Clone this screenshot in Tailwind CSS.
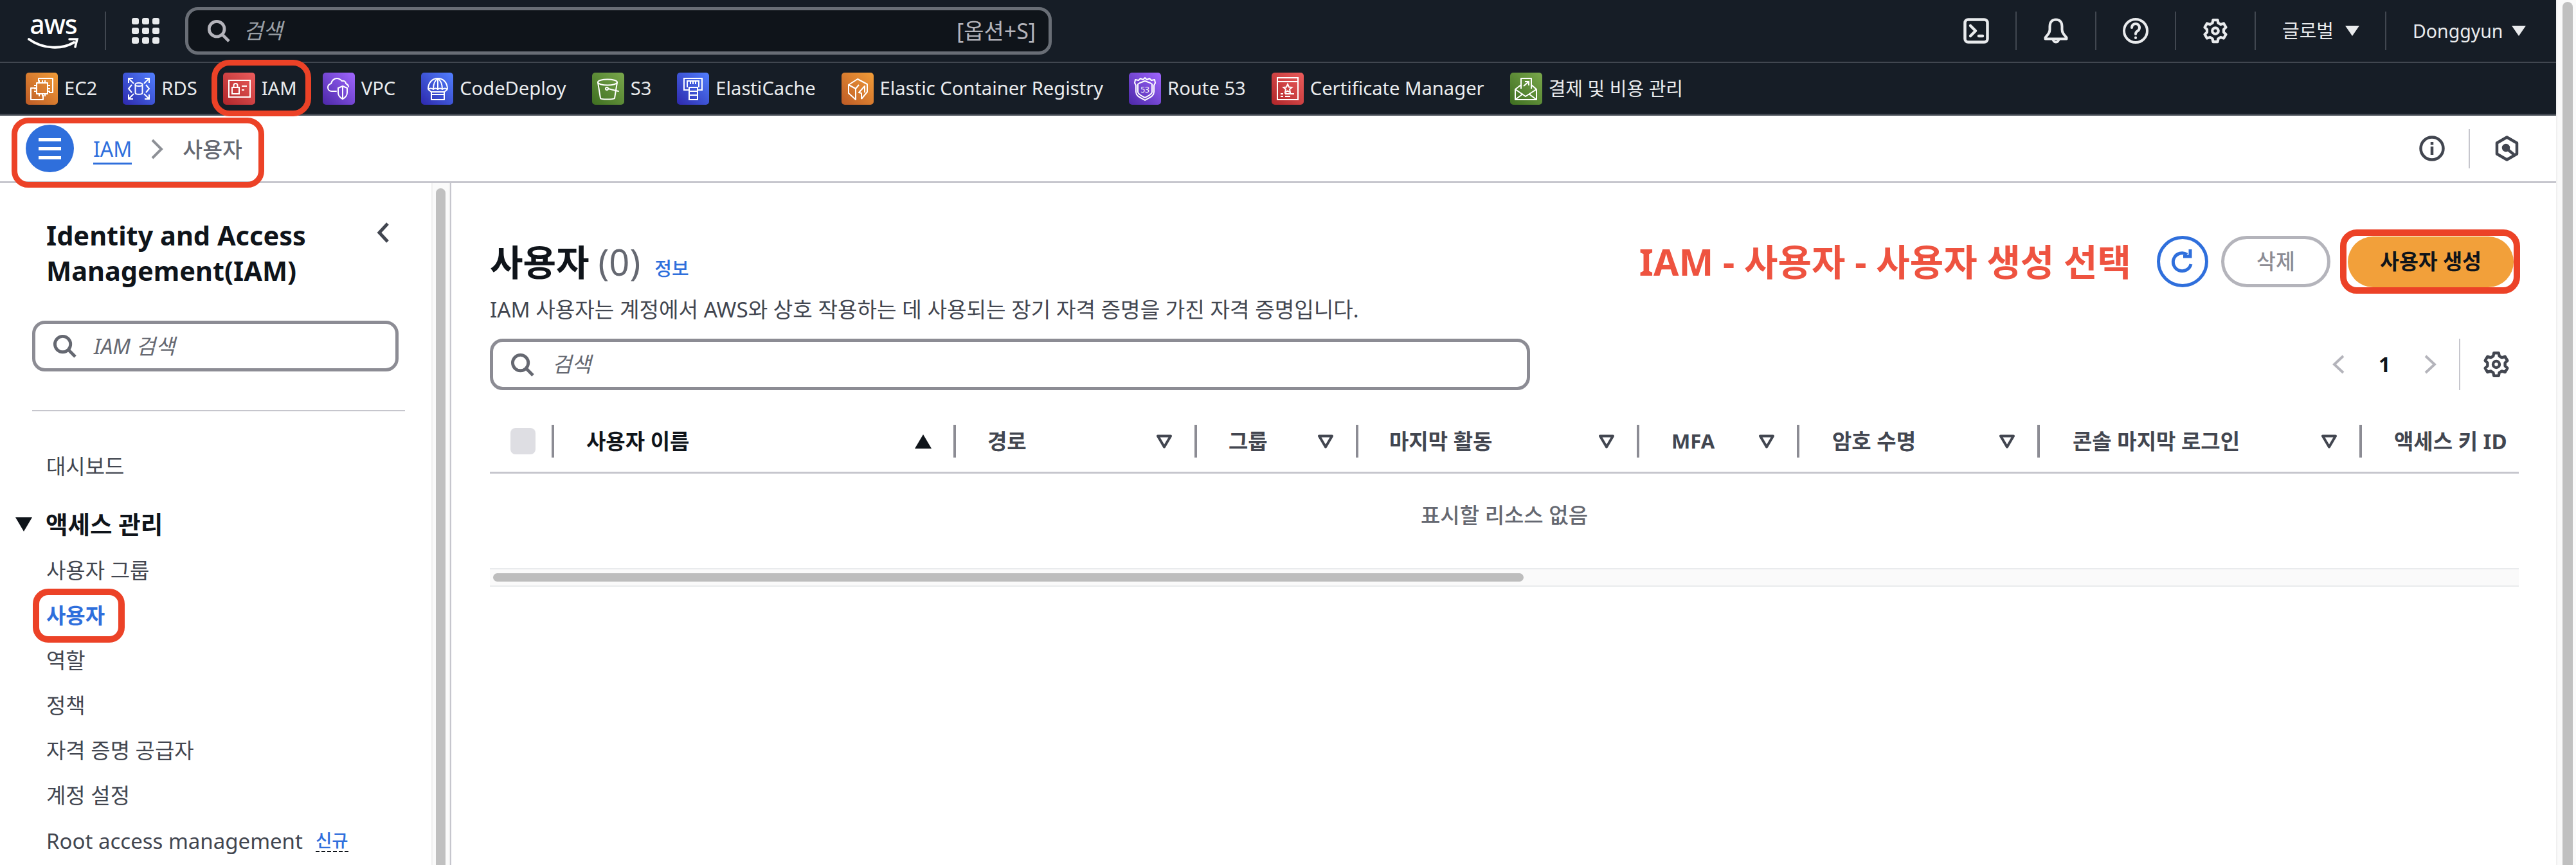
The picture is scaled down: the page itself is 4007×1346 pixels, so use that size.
<!DOCTYPE html>
<html lang="ko">
<head>
    <meta charset="UTF-8">
    <title>IAM 사용자</title>
    <script src="https://cdn.jsdelivr.net/npm/@tailwindcss/browser@4"></script>
</head>
<body class="bg-white text-[#0f141a] font-['Noto_Sans','Noto_Sans_CJK_KR',sans-serif]">

<svg class="hidden">
    <symbol id="gear" viewBox="0 0 16 16"><path fill="none" stroke="currentColor" stroke-width="1.7" stroke-linejoin="round" d="M6.6 1.2h2.8l.4 1.9 1.5.9 1.9-.6 1.4 2.4-1.4 1.3v1.8l1.4 1.3-1.4 2.4-1.9-.6-1.5.9-.4 1.9H6.6l-.4-1.9-1.5-.9-1.9.6-1.4-2.4 1.4-1.3V7.1L1.4 5.8l1.4-2.4 1.9.6 1.5-.9z"/><circle cx="8" cy="8" r="1.9" fill="none" stroke="currentColor" stroke-width="1.7"/></symbol>
    <symbol id="search" viewBox="0 0 38 38"><circle cx="16" cy="16" r="12.5" fill="none" stroke="currentColor" stroke-width="5"/><path d="M25 25l11 11" stroke="currentColor" stroke-width="5" fill="none"/></symbol>
    <symbol id="sortdown" viewBox="0 0 26 22"><path d="M3 2.5h20L13 19.5z" fill="none" stroke="currentColor" stroke-width="4" stroke-linejoin="round"/></symbol>
</svg>

<div class="relative flex h-[1346px] w-[4007px] overflow-hidden">
    <div class="flex w-[3976px] flex-col">

        <!-- Top nav -->
        <header class="flex h-[98px] items-center border-b-2 border-[#414750] bg-[#161d26] pl-[43px] text-[#e9ebed]">
            <div class="flex h-[60px] w-[80px] flex-col items-center">
                <span class="h-[38px] text-[41px] leading-[38px] font-medium tracking-[-1px] text-white">aws</span>
                <svg class="mt-[2px] h-[20px] w-[80px]" viewBox="0 0 80 20"><path d="M2 3c22 16 52 16 70 5" fill="none" stroke="white" stroke-width="4" stroke-linecap="round"/><path d="M65 3h12l-3 12" fill="none" stroke="white" stroke-width="3.5" stroke-linecap="round"/></svg>
            </div>
            <div class="ml-[40px] h-[60px] w-[2px] bg-[#414750]"></div>
            <div class="ml-[40px] grid w-[43px] grid-cols-3 gap-[5px]">
                <i class="h-[10px] rounded-[3px] bg-[#e9ebed]"></i><i class="h-[10px] rounded-[3px] bg-[#e9ebed]"></i><i class="h-[10px] rounded-[3px] bg-[#e9ebed]"></i>
                <i class="h-[10px] rounded-[3px] bg-[#e9ebed]"></i><i class="h-[10px] rounded-[3px] bg-[#e9ebed]"></i><i class="h-[10px] rounded-[3px] bg-[#e9ebed]"></i>
                <i class="h-[10px] rounded-[3px] bg-[#e9ebed]"></i><i class="h-[10px] rounded-[3px] bg-[#e9ebed]"></i><i class="h-[10px] rounded-[3px] bg-[#e9ebed]"></i>
            </div>
            <div class="ml-[40px] flex h-[74px] w-[1348px] items-center rounded-[20px] border-[5px] border-[#696e76] bg-[#0f141a] pr-[20px] pl-[28px] text-[#b4b4bb]">
                <svg class="h-[36px] w-[38px]"><use href="#search"/></svg>
                <span class="ml-[20px] text-[33px] italic text-[#9ba0a6]">검색</span>
                <span class="ml-auto text-[34px]">[옵션+S]</span>
            </div>
            <div class="ml-auto flex h-[60px] items-center text-[#e9ebed]">
                <div class="px-[41px]">
                    <svg class="h-[40px] w-[40px]" viewBox="0 0 40 40" fill="none" stroke="currentColor" stroke-width="4.5" stroke-linecap="round" stroke-linejoin="round"><rect x="2.5" y="2.5" width="35" height="35" rx="5"/><path d="M11 12l8 8-8 8"/><path d="M24 28h6"/></svg>
                </div>
                <div class="flex h-full items-center border-l-2 border-[#414750] px-[41px]">
                    <svg class="h-[40px] w-[40px]" viewBox="0 0 40 40" fill="none" stroke="currentColor" stroke-width="4" stroke-linecap="round" stroke-linejoin="round"><path d="M20 2.5c-6.500 0-9.500 4.500-9.500 10.500v5c0 5-3 8-7 12.500v2h33v-2c-4-4.500-7-7.500-7-12.500v-5c0-6-3-10.500-9.500-10.500z"/><path d="M15.500 33a4.500 4.500 0 0 0 9 0"/></svg>
                </div>
                <div class="flex h-full items-center border-l-2 border-[#414750] px-[41px]">
                    <svg class="h-[40px] w-[40px]" viewBox="0 0 40 40" fill="none" stroke="currentColor" stroke-width="4" stroke-linecap="round"><circle cx="20" cy="20" r="18"/><path d="M14 15a6 6 0 1 1 9 5.200c-2 1.200-3 2.300-3 4.800"/><path d="M20 30.500v.5"/></svg>
                </div>
                <div class="flex h-full items-center border-l-2 border-[#414750] px-[41px]">
                    <svg class="h-[40px] w-[40px]"><use href="#gear"/></svg>
                </div>
                <div class="flex h-full w-[203px] items-center border-l-2 border-[#414750] pl-[41px] text-[29px]">
                    글로벌
                    <svg class="ml-[18px] h-[16px] w-[22px]" viewBox="0 0 22 16"><path d="M0 0h22L11 16z" fill="currentColor"/></svg>
                </div>
                <div class="flex h-full w-[266px] items-center border-l-2 border-[#414750] pl-[41px] text-[28.5px]">
                    Donggyun
                    <svg class="ml-[14px] h-[16px] w-[22px]" viewBox="0 0 22 16"><path d="M0 0h22L11 16z" fill="currentColor"/></svg>
                </div>
            </div>
        </header>

        <!-- Favorites bar -->
        <nav class="flex h-[82px] items-center gap-[40px] border-b-[3px] border-[#414750] bg-[#161d26] pl-[40px] text-[29.15px] text-[#e9ebed]">
            <div class="flex items-center gap-[10px]">
                <svg class="h-[50px] w-[50px] rounded-[5px] bg-linear-to-tr from-[#bd5b26] to-[#f29d38]" viewBox="0 0 50 50" fill="none" stroke="white" stroke-width="2" stroke-linejoin="round"><path d="M20 14V9h22v22h-6"/><path d="M16 24H8v18h19v-7"/><rect x="17" y="16" width="17" height="17"/><path d="M21 12v4M26 12v4M30 12v4M21 33v4M26 33v4M30 33v4M13 20h4M13 25h4M13 29h4M34 20h4M34 25h4M34 29h4"/></svg>
                EC2
            </div>
            <div class="flex items-center gap-[10px]">
                <svg class="h-[50px] w-[50px] rounded-[5px] bg-linear-to-tr from-[#2e27ad] to-[#527fff]" viewBox="0 0 50 50" fill="none" stroke="white" stroke-width="2"><path d="M9 9l8 8M9 16V9h7M41 9l-8 8M41 16V9h-7M9 41l8-8M9 34v7h7M41 41l-8-8M41 34v7h-7"/><ellipse cx="25" cy="18.500" rx="5.500" ry="2.500"/><path d="M19.500 18.500v13c0 3 11 3 11 0v-13"/><path d="M14 19l-5 6 5 6M36 19l5 6-5 6"/></svg>
                RDS
            </div>
            <div class="flex items-center gap-[10px]">
                <svg class="h-[50px] w-[50px] rounded-[5px] bg-linear-to-tr from-[#b0252a] to-[#ec5c5c]" viewBox="0 0 50 50" fill="none" stroke="white" stroke-width="2"><rect x="9" y="12" width="33" height="26"/><rect x="14" y="23" width="11" height="10"/><path d="M16.500 23v-3a3 3 0 0 1 6 0v3M29 21h8M29 27h4"/></svg>
                IAM
            </div>
            <div class="flex items-center gap-[10px]">
                <svg class="h-[50px] w-[50px] rounded-[5px] bg-linear-to-tr from-[#4d27a8] to-[#a166ff]" viewBox="0 0 50 50" fill="none" stroke="white" stroke-width="2" stroke-linecap="round" stroke-linejoin="round"><path d="M21 29h-7c-4 0-6-3-6-6 0-3 2-5 5-6 1-5 5-8 9-8 4 0 6 2 8 4 3-1 6 1 6 4 2 1 4 2 4 5"/><path d="M31 21l7 3v7c0 5-3 8-7 10-4-2-7-5-7-10v-7z"/><path d="M31 21v20"/></svg>
                VPC
            </div>
            <div class="flex items-center gap-[10px]">
                <svg class="h-[50px] w-[50px] rounded-[5px] bg-linear-to-tr from-[#2e27ad] to-[#527fff]" viewBox="0 0 50 50" fill="none" stroke="white" stroke-width="2" stroke-linejoin="round"><path d="M11 26C11 16 17 9 26 9s15 7 15 17"/><path d="M26 9v18M26 9c-6 4-7 11-7 17M26 9c6 4 7 11 7 17"/><path d="M11 26q4-3 8 0q3.500-3 7 0q3.500-3 7 0q4-3 8 0"/><path d="M11 26l6 5M41 26l-6 5"/><rect x="16" y="30" width="20" height="12"/><path d="M16 34h20"/></svg>
                CodeDeploy
            </div>
            <div class="flex items-center gap-[10px]">
                <svg class="h-[50px] w-[50px] rounded-[5px] bg-linear-to-tr from-[#3f6f21] to-[#7aa84c]" viewBox="0 0 50 50" fill="none" stroke="white" stroke-width="2" stroke-linecap="round"><ellipse cx="24" cy="15" rx="15" ry="4.500"/><path d="M9 15l4 25c1 2 20 2 22 0l4-25"/><circle cx="23" cy="25" r="2"/><path d="M25 25l16 4"/></svg>
                S3
            </div>
            <div class="flex items-center gap-[10px]">
                <svg class="h-[50px] w-[50px] rounded-[5px] bg-linear-to-tr from-[#2e27ad] to-[#527fff]" viewBox="0 0 50 50" fill="none" stroke="white" stroke-width="2"><path d="M19 27h-8V9h28v18h-8"/><path d="M16 23V13h18v10"/><path d="M21 13v5M25 13v5M29 13v5"/><rect x="19" y="23" width="13" height="19"/><path d="M19 29h13M19 35h13"/></svg>
                ElastiCache
            </div>
            <div class="flex items-center gap-[10px]">
                <svg class="h-[50px] w-[50px] rounded-[5px] bg-linear-to-tr from-[#bd5b26] to-[#f29d38]" viewBox="0 0 50 50" fill="none" stroke="white" stroke-width="2" stroke-linejoin="round"><path d="M11 19l14-9 15 8v12l-9 11"/><path d="M11 19v13l11 10V25z"/><path d="M22 25l5-6"/><path d="M31 41v-9l-4-1 9-10v10"/></svg>
                Elastic Container Registry
            </div>
            <div class="flex items-center gap-[10px]">
                <svg class="h-[50px] w-[50px] rounded-[5px] bg-linear-to-tr from-[#4d27a8] to-[#a166ff]" viewBox="0 0 50 50" fill="none" stroke="white" stroke-width="2" stroke-linejoin="round"><path d="M25 8l3 3 4-2 3 3 5-1 1 5-2 4v10c0 7-8 9-14 13-6-4-14-6-14-13V20l-2-4 1-5 5 1 3-3 4 2z"/><path d="M25 13l8 3 3 2v12c0 4-6 6-11 9-5-3-11-5-11-9V18l3-2z"/><text x="25" y="31" font-size="12" fill="white" stroke="none" text-anchor="middle">53</text></svg>
                Route 53
            </div>
            <div class="flex items-center gap-[10px]">
                <svg class="h-[50px] w-[50px] rounded-[5px] bg-linear-to-tr from-[#b0252a] to-[#ec5c5c]" viewBox="0 0 50 50" fill="none" stroke="white" stroke-width="2"><path d="M9 8h32v34H9z"/><path d="M9 14h32"/><path d="M25 18l2 4.500 4.500.5-3.500 3 1 5-4-2.500-4 2.500 1-5-3.500-3 4.500-.5z"/><path d="M14 33h4M21 33h14M14 37h4M21 37h8"/></svg>
                Certificate Manager
            </div>
            <div class="flex items-center gap-[10px]">
                <svg class="h-[50px] w-[50px] rounded-[5px] bg-linear-to-tr from-[#3f6f21] to-[#7aa84c]" viewBox="0 0 50 50" fill="none" stroke="white" stroke-width="2" stroke-linejoin="round"><path d="M17 25V9h16v16"/><path d="M21 21l8-7M23 14h6v6"/><path d="M17 19l-9 7v16h33V26l-8-7"/><path d="M8 26l16 11 17-11M8 42l12-9M41 42l-12-9"/></svg>
                <span class="text-[29px]">결제 및 비용 관리</span>
            </div>
        </nav>

        <!-- Breadcrumb bar -->
        <div class="flex h-[105px] items-center border-b-[3px] border-[#c6c6cd] pl-[40px]">
            <div class="flex h-[74px] w-[75px] flex-col items-center justify-center gap-[9px] rounded-full bg-[#2f6fdc]">
                <i class="h-[5px] w-[35px] bg-white"></i><i class="h-[5px] w-[35px] bg-white"></i><i class="h-[5px] w-[35px] bg-white"></i>
            </div>
            <span class="mt-[4px] ml-[30px] border-b-[3px] border-[#2f6fdc] text-[32px] leading-[42px] text-[#2f6fdc]">IAM</span>
            <svg class="mt-[2px] ml-[30px] h-[32px] w-[19px]" viewBox="0 0 19 32"><path d="M2 2l14 14-14 14" fill="none" stroke="#8d9096" stroke-width="4"/></svg>
            <span class="mt-[2px] ml-[30px] text-[33.500px] font-medium text-[#656871]">사용자</span>
            <div class="ml-auto flex h-[61px] items-center pr-[58px] text-[#424650]">
                <svg class="h-[40px] w-[40px]" viewBox="0 0 40 40" fill="none" stroke="currentColor" stroke-width="4.500"><circle cx="20" cy="20" r="17.500"/><path d="M20 17v13M20 10v4.500"/></svg>
                <div class="ml-[37px] h-full w-[2px] bg-[#c6c6cd]"></div>
                <svg class="ml-[39px] h-[40px] w-[37px]" viewBox="0 0 37 40" fill="none" stroke="currentColor" stroke-width="4.500" stroke-linejoin="round"><path d="M18.500 2.500l15.500 9v17l-15.500 9-15.500-9v-17z"/><circle cx="17" cy="19" r="4" fill="currentColor"/><path d="M18 20l12 10"/></svg>
            </div>
        </div>

        <div class="flex min-h-0 flex-1">
            <!-- Sidebar -->
            <aside class="flex w-[702px] border-r-2 border-[#c6c6cd]">
                <div class="w-[671px] pt-[54px] pl-[24px]">
                    <div class="flex items-start pl-[48px]">
                        <h2 class="w-[514px] text-[41.500px] leading-[55px] font-bold">Identity and Access Management(IAM)</h2>
                        <svg class="mt-[6px] h-[34px] w-[20px]" viewBox="0 0 20 34"><path d="M17 3L4 17l13 14" fill="none" stroke="#424650" stroke-width="5"/></svg>
                    </div>
                    <div class="mt-[50px] ml-[26px] flex h-[79px] w-[570px] items-center rounded-[20px] border-[5px] border-[#8c8c94] pl-[27px] text-[#656871]">
                        <svg class="h-[37px] w-[37px]"><use href="#search"/></svg>
                        <span class="ml-[27px] text-[33px] italic">IAM 검색</span>
                    </div>
                    <div class="mt-[60px] ml-[26px] h-[2px] w-[580px] bg-[#c6c6cd]"></div>
                    <ul class="mt-[51px] text-[33px] text-[#424650]">
                        <li class="flex h-[70px] items-center pl-[48px]">대시보드</li>
                        <li class="mt-[20px] flex h-[70px] items-center gap-[21px] text-[37.500px] font-bold text-[#0f141a]">
                            <svg class="h-[22px] w-[26px]" viewBox="0 0 26 22"><path d="M0 0h26L13 22z" fill="#0f141a"/></svg>
                            액세스 관리
                        </li>
                        <li class="mt-[2px] flex h-[70px] items-center pl-[48px]">사용자 그룹</li>
                        <li class="flex h-[70px] items-center pl-[48px] font-bold text-[#2f6fdc]">사용자</li>
                        <li class="flex h-[70px] items-center pl-[48px]">역할</li>
                        <li class="flex h-[70px] items-center pl-[48px]">정책</li>
                        <li class="flex h-[70px] items-center pl-[48px]">자격 증명 공급자</li>
                        <li class="flex h-[70px] items-center pl-[48px]">계정 설정</li>
                        <li class="flex h-[72px] items-center pl-[48px]">
                            Root access management
                            <span class="ml-[20px] border-b-2 border-dashed border-[#0f141a] text-[27.500px] leading-[32px] font-medium text-[#2f6fdc]">신규</span>
                        </li>
                    </ul>
                </div>
                <div class="w-[29px] border-x-2 border-[#f0f0f0] bg-[#fafafa] px-[5px] pt-[8px]">
                    <div class="h-full rounded-t-[8px] bg-[#c0c0c0]"></div>
                </div>
            </aside>

            <!-- Main -->
            <main class="w-[3274px] pt-[82px] pr-[58px] pl-[60px]">
                <div class="flex h-[80px] items-center">
                    <h1 class="flex items-baseline text-[56px] font-bold">
                        사용자
                        <span class="ml-[14px] font-normal text-[#656871]">(0)</span>
                        <span class="ml-[22px] text-[29px] font-medium text-[#2f6fdc]">정보</span>
                    </h1>
                    <span class="ml-auto text-[57px] leading-none font-bold text-[#ee5340]">IAM - 사용자 - 사용자 생성 선택</span>
                    <div class="ml-[40px] flex h-[80px] w-[80px] items-center justify-center rounded-full border-[5px] border-[#2f6fdc]">
                        <svg class="h-[44px] w-[44px]" viewBox="0 0 44 44" fill="none" stroke="#2f6fdc" stroke-width="5"><path d="M35 26a14 14 0 1 1-6-15"/><path d="M34 3v11H23"/></svg>
                    </div>
                    <div class="ml-[20px] flex h-[80px] w-[170px] items-center justify-center rounded-full border-[5px] border-[#b4b4bb] text-[32.500px] font-medium text-[#8c8c94]">삭제</div>
                    <div class="mr-[8px] ml-[27px] flex h-[79px] w-[258px] items-center justify-center rounded-full bg-[#f2a03a] text-[32.500px] font-bold">사용자 생성</div>
                </div>
                <p class="mt-[15px] text-[33.200px] leading-[40px] text-[#424650]">IAM 사용자는 계정에서 AWS와 상호 작용하는 데 사용되는 장기 자격 증명을 가진 자격 증명입니다.</p>
                <div class="mt-[25px] flex items-center">
                    <div class="flex h-[80px] w-[1618px] items-center rounded-[20px] border-[5px] border-[#8c8c94] pl-[27px] text-[#656871]">
                        <svg class="h-[37px] w-[37px]"><use href="#search"/></svg>
                        <span class="ml-[28px] text-[33px] italic">검색</span>
                    </div>
                    <div class="ml-auto flex h-[80px] items-center">
                        <svg class="h-[32px] w-[23px]" viewBox="0 0 23 32"><path d="M19 3L5 16l14 13" fill="none" stroke="#b4b4bb" stroke-width="4"/></svg>
                        <span class="mx-[51px] w-[18px] text-center text-[32px] font-bold">1</span>
                        <svg class="h-[32px] w-[23px]" viewBox="0 0 23 32"><path d="M4 3l14 13L4 29" fill="none" stroke="#b4b4bb" stroke-width="4"/></svg>
                        <div class="mr-[35px] ml-[33px] h-full w-[2px] bg-[#c6c6cd]"></div>
                        <svg class="mr-[14px] h-[42px] w-[42px] text-[#424650]"><use href="#gear"/></svg>
                    </div>
                </div>

                <!-- Table -->
                <div class="mt-[54px] flex h-[76px] overflow-hidden border-b-[3px] border-[#c6c6cd] pb-[22px] text-[33px] font-bold text-[#424650]">
                    <div class="flex w-[96px] shrink-0 items-center pl-[32px]"><span class="h-[41px] w-[39px] rounded-[8px] bg-[#dedee3]"></span></div>
                    <div class="flex w-[625px] shrink-0 items-center border-l-4 border-[#8c8c94] pr-[34px] pl-[50px] text-[#0f141a]">사용자 이름<svg class="ml-auto h-[22px] w-[26px]" viewBox="0 0 26 22"><path d="M13 0l13 22H0z" fill="#0f141a"/></svg></div>
                    <div class="flex w-[375px] shrink-0 items-center border-l-4 border-[#8c8c94] pr-[34px] pl-[49px]">경로<svg class="ml-auto h-[22px] w-[26px]"><use href="#sortdown"/></svg></div>
                    <div class="flex w-[251px] shrink-0 items-center border-l-4 border-[#8c8c94] pr-[34px] pl-[49px]">그룹<svg class="ml-auto h-[22px] w-[26px]"><use href="#sortdown"/></svg></div>
                    <div class="flex w-[437px] shrink-0 items-center border-l-4 border-[#8c8c94] pr-[34px] pl-[48px]">마지막 활동<svg class="ml-auto h-[22px] w-[26px]"><use href="#sortdown"/></svg></div>
                    <div class="flex w-[249px] shrink-0 items-center border-l-4 border-[#8c8c94] pr-[34px] pl-[50px] text-[31px]">MFA<svg class="ml-auto h-[22px] w-[26px]"><use href="#sortdown"/></svg></div>
                    <div class="flex w-[374px] shrink-0 items-center border-l-4 border-[#8c8c94] pr-[34px] pl-[51px]">암호 수명<svg class="ml-auto h-[22px] w-[26px]"><use href="#sortdown"/></svg></div>
                    <div class="flex w-[501px] shrink-0 items-center border-l-4 border-[#8c8c94] pr-[34px] pl-[51px]">콘솔 마지막 로그인<svg class="ml-auto h-[22px] w-[26px]"><use href="#sortdown"/></svg></div>
                    <div class="flex w-[247px] shrink-0 items-center border-l-4 border-[#8c8c94] pl-[50px] whitespace-nowrap">액세스 키 ID</div>
                </div>
                <div class="flex h-[147px] items-center justify-center pb-[18px] text-[33px] font-medium text-[#656871]">표시할 리소스 없음</div>
                <div class="h-[29px] border-y-2 border-[#e9ebed] bg-[#fafafa] py-[6px] pl-[5px]">
                    <div class="h-full w-[1603px] rounded-full bg-[#bdbdbd]"></div>
                </div>
            </main>
        </div>
    </div>

    <!-- Page scrollbar -->
    <div class="w-[31px] border-l-2 border-[#f0f0f0] bg-[#fafafa] pt-[3px] pl-[8px]">
        <div class="h-full w-[16px] rounded-t-[8px] bg-[#c0c0c0]"></div>
    </div>

    <!-- Red annotation outlines -->
    <div class="absolute top-[93px] left-[329px] h-[88px] w-[155px] rounded-[28px] border-[9px] border-[#ec4227]"></div>
    <div class="absolute top-[183px] left-[18px] h-[109px] w-[393px] rounded-[26px] border-[9px] border-[#ec4227]"></div>
    <div class="absolute top-[916px] left-[51px] h-[84px] w-[143px] rounded-[24px] border-[10px] border-[#ec4227]"></div>
    <div class="absolute top-[357px] left-[3640px] h-[100px] w-[280px] rounded-[26px] border-[10px] border-[#ec4227]"></div>
</div>

</body>
</html>
